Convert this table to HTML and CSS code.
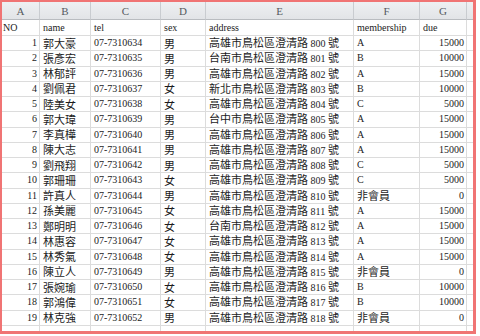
FILE: index.html
```html
<!DOCTYPE html>
<html lang="zh-Hant">
<head>
<meta charset="utf-8">
<title>Sheet</title>
<link rel="stylesheet" href="styles.css">
</head>
<body>
<div class="frame">
  <div class="sheet">
    <div class="hd">A</div><div class="hd">B</div><div class="hd">C</div><div class="hd">D</div><div class="hd">E</div><div class="hd">F</div><div class="hd">G</div><div class="hd"></div>

    <div class="c first">NO</div><div class="c">name</div><div class="c">tel</div><div class="c">sex</div><div class="c">address</div><div class="c">membership</div><div class="c">due</div><div class="c"></div>

    <div class="c num">1</div><div class="c"><span class="zh">郭大豪</span></div><div class="c">07-7310634</div><div class="c"><span class="zh">男</span></div><div class="c"><span class="addr"><span class="zh">高雄市鳥松區澄清路</span> 800 <span class="zh">號</span></span></div><div class="c">A</div><div class="c num">15000</div><div class="c"></div>
    <div class="c num">2</div><div class="c"><span class="zh">張彥宏</span></div><div class="c">07-7310635</div><div class="c"><span class="zh">男</span></div><div class="c"><span class="addr"><span class="zh">台南市鳥松區澄清路</span> 801 <span class="zh">號</span></span></div><div class="c">B</div><div class="c num">10000</div><div class="c"></div>
    <div class="c num">3</div><div class="c"><span class="zh">林郁評</span></div><div class="c">07-7310636</div><div class="c"><span class="zh">男</span></div><div class="c"><span class="addr"><span class="zh">高雄市鳥松區澄清路</span> 802 <span class="zh">號</span></span></div><div class="c">A</div><div class="c num">15000</div><div class="c"></div>
    <div class="c num">4</div><div class="c"><span class="zh">劉佩君</span></div><div class="c">07-7310637</div><div class="c"><span class="zh">女</span></div><div class="c"><span class="addr"><span class="zh">新北市鳥松區澄清路</span> 803 <span class="zh">號</span></span></div><div class="c">B</div><div class="c num">10000</div><div class="c"></div>
    <div class="c num">5</div><div class="c"><span class="zh">陸美女</span></div><div class="c">07-7310638</div><div class="c"><span class="zh">女</span></div><div class="c"><span class="addr"><span class="zh">高雄市鳥松區澄清路</span> 804 <span class="zh">號</span></span></div><div class="c">C</div><div class="c num">5000</div><div class="c"></div>
    <div class="c num">6</div><div class="c"><span class="zh">郭大瑋</span></div><div class="c">07-7310639</div><div class="c"><span class="zh">男</span></div><div class="c"><span class="addr"><span class="zh">台中市鳥松區澄清路</span> 805 <span class="zh">號</span></span></div><div class="c">A</div><div class="c num">15000</div><div class="c"></div>
    <div class="c num">7</div><div class="c"><span class="zh">李真樺</span></div><div class="c">07-7310640</div><div class="c"><span class="zh">男</span></div><div class="c"><span class="addr"><span class="zh">高雄市鳥松區澄清路</span> 806 <span class="zh">號</span></span></div><div class="c">A</div><div class="c num">15000</div><div class="c"></div>
    <div class="c num">8</div><div class="c"><span class="zh">陳大志</span></div><div class="c">07-7310641</div><div class="c"><span class="zh">男</span></div><div class="c"><span class="addr"><span class="zh">高雄市鳥松區澄清路</span> 807 <span class="zh">號</span></span></div><div class="c">A</div><div class="c num">15000</div><div class="c"></div>
    <div class="c num">9</div><div class="c"><span class="zh">劉飛翔</span></div><div class="c">07-7310642</div><div class="c"><span class="zh">男</span></div><div class="c"><span class="addr"><span class="zh">高雄市鳥松區澄清路</span> 808 <span class="zh">號</span></span></div><div class="c">C</div><div class="c num">5000</div><div class="c"></div>
    <div class="c num">10</div><div class="c"><span class="zh">郭珊珊</span></div><div class="c">07-7310643</div><div class="c"><span class="zh">女</span></div><div class="c"><span class="addr"><span class="zh">高雄市鳥松區澄清路</span> 809 <span class="zh">號</span></span></div><div class="c">C</div><div class="c num">5000</div><div class="c"></div>
    <div class="c num">11</div><div class="c"><span class="zh">許真人</span></div><div class="c">07-7310644</div><div class="c"><span class="zh">男</span></div><div class="c"><span class="addr"><span class="zh">高雄市鳥松區澄清路</span> 810 <span class="zh">號</span></span></div><div class="c"><span class="zh">非會員</span></div><div class="c num">0</div><div class="c"></div>
    <div class="c num">12</div><div class="c"><span class="zh">孫美麗</span></div><div class="c">07-7310645</div><div class="c"><span class="zh">女</span></div><div class="c"><span class="addr"><span class="zh">高雄市鳥松區澄清路</span> 811 <span class="zh">號</span></span></div><div class="c">A</div><div class="c num">15000</div><div class="c"></div>
    <div class="c num">13</div><div class="c"><span class="zh">鄭明明</span></div><div class="c">07-7310646</div><div class="c"><span class="zh">女</span></div><div class="c"><span class="addr"><span class="zh">台南市鳥松區澄清路</span> 812 <span class="zh">號</span></span></div><div class="c">A</div><div class="c num">15000</div><div class="c"></div>
    <div class="c num">14</div><div class="c"><span class="zh">林惠容</span></div><div class="c">07-7310647</div><div class="c"><span class="zh">女</span></div><div class="c"><span class="addr"><span class="zh">高雄市鳥松區澄清路</span> 813 <span class="zh">號</span></span></div><div class="c">A</div><div class="c num">15000</div><div class="c"></div>
    <div class="c num">15</div><div class="c"><span class="zh">林秀氣</span></div><div class="c">07-7310648</div><div class="c"><span class="zh">女</span></div><div class="c"><span class="addr"><span class="zh">高雄市鳥松區澄清路</span> 814 <span class="zh">號</span></span></div><div class="c">A</div><div class="c num">15000</div><div class="c"></div>
    <div class="c num">16</div><div class="c"><span class="zh">陳立人</span></div><div class="c">07-7310649</div><div class="c"><span class="zh">男</span></div><div class="c"><span class="addr"><span class="zh">高雄市鳥松區澄清路</span> 815 <span class="zh">號</span></span></div><div class="c"><span class="zh">非會員</span></div><div class="c num">0</div><div class="c"></div>
    <div class="c num">17</div><div class="c"><span class="zh">張婉瑜</span></div><div class="c">07-7310650</div><div class="c"><span class="zh">女</span></div><div class="c"><span class="addr"><span class="zh">高雄市鳥松區澄清路</span> 816 <span class="zh">號</span></span></div><div class="c">B</div><div class="c num">10000</div><div class="c"></div>
    <div class="c num">18</div><div class="c"><span class="zh">郭鴻偉</span></div><div class="c">07-7310651</div><div class="c"><span class="zh">女</span></div><div class="c"><span class="addr"><span class="zh">高雄市鳥松區澄清路</span> 817 <span class="zh">號</span></span></div><div class="c">B</div><div class="c num">10000</div><div class="c"></div>
    <div class="c num">19</div><div class="c"><span class="zh">林克強</span></div><div class="c">07-7310652</div><div class="c"><span class="zh">男</span></div><div class="c"><span class="addr"><span class="zh">高雄市鳥松區澄清路</span> 818 <span class="zh">號</span></span></div><div class="c"><span class="zh">非會員</span></div><div class="c num">0</div><div class="c"></div>

    <div class="c"></div><div class="c"></div><div class="c"></div><div class="c"></div><div class="c"></div><div class="c"></div><div class="c"></div><div class="c"></div>
  </div>
</div>
</body>
</html>
```

FILE: styles.css
```css
html, body {
  margin: 0;
  padding: 0;
  background: #ffffff;
}

.frame {
  box-sizing: border-box;
  width: 476px;
  height: 334px;
  border: 2px solid #f07474;
  border-bottom-width: 3px;
  border-right-width: 3px;
  overflow: hidden;
}

.sheet {
  display: grid;
  grid-template-columns: 38px 51px 70px 45px 148px 66px 47px 20px;
  grid-template-rows: 18px 16px repeat(20, 15.26px);
  font-family: "Liberation Serif", "Noto Sans CJK TC", serif;
  font-size: 10px;
  color: #1c1c1c;
}

.hd {
  box-sizing: border-box;
  background: linear-gradient(#eef0f2, #e2e4e7);
  border-right: 1px solid #c9ccd0;
  border-bottom: 1px solid #b9bcc0;
  color: #555a60;
  font-size: 11px;
  display: flex;
  align-items: center;
  justify-content: center;
}

.c {
  box-sizing: border-box;
  border-right: 1px solid #dcdcdc;
  border-bottom: 1px solid #dcdcdc;
  display: flex;
  align-items: center;
  padding: 0 2px 0 3px;
  white-space: nowrap;
  line-height: 1;
}

.first {
  padding-left: 1px;
}

.num {
  justify-content: flex-end;
  padding-right: 2px;
}

.addr {
  white-space: pre;
}

.zh {
  font-family: "Noto Sans CJK TC", sans-serif;
  font-size: 11px;
}
```
